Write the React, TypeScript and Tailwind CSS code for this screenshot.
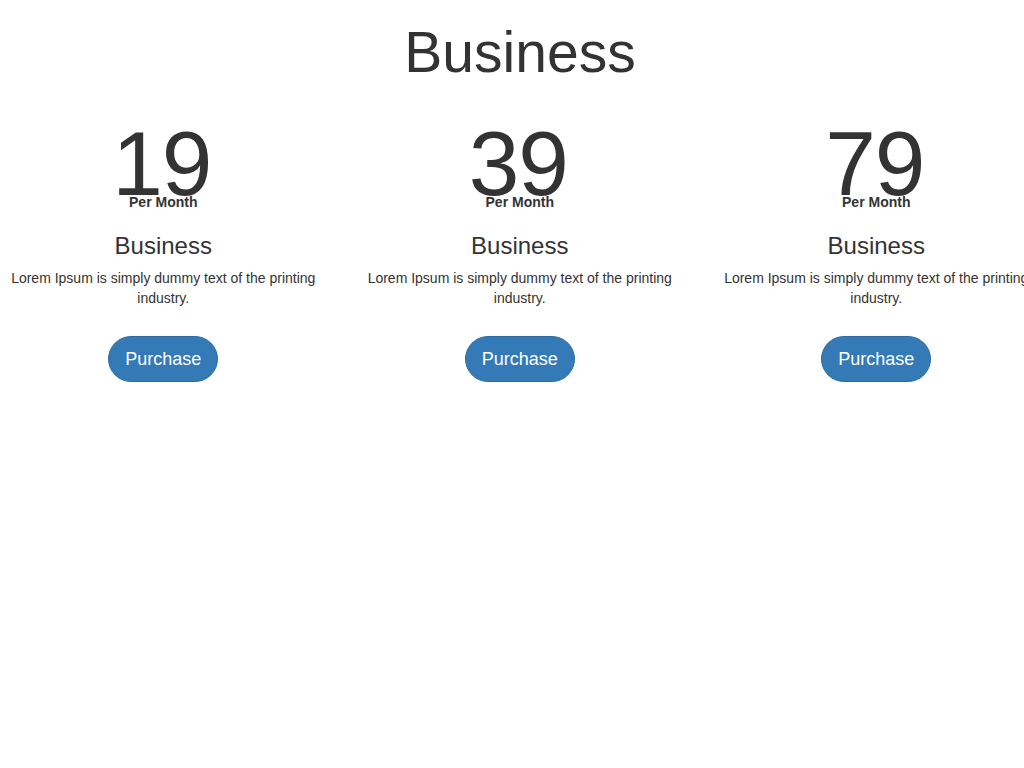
import React from "react";

interface Plan {
  price: string;
  name: string;
  description: string;
}

const plans: Plan[] = [
  { price: "19", name: "Business", description: "Lorem Ipsum is simply dummy text of the printing industry." },
  { price: "39", name: "Business", description: "Lorem Ipsum is simply dummy text of the printing industry." },
  { price: "79", name: "Business", description: "Lorem Ipsum is simply dummy text of the printing industry." },
];

const PlanCard: React.FC<{ plan: Plan }> = ({ plan }) => {
  return (
    <div className="w-[356.5px] shrink-0 px-[15px] flex flex-col items-center text-center">
      <div className="text-[91px] leading-[72px] tracking-[-1px] -ml-[3px]">{plan.price}</div>
      <div className="text-[14px] leading-[14px] font-bold -mt-[5px]">Per Month</div>
      <h3 className="text-[24px] leading-[1.1] font-medium mt-[24px]">{plan.name}</h3>
      <p className="text-[14px] leading-[20px] mt-[9px]">{plan.description}</p>
      <button className="mt-[28px] bg-[#337ab7] border border-[#2e6da4] text-white text-[18px] leading-[24px] px-[16px] py-[10px] rounded-full">
        Purchase
      </button>
    </div>
  );
};

export default function App() {
  return (
    <div className="w-full h-[768px] overflow-hidden bg-white text-[#333] font-['Liberation_Sans',Arial,sans-serif]">
      <div className="-ml-[15px] w-[1070px]">
        <h1 className="text-[57px] leading-[1.1] font-medium mt-[21px] text-center">Business</h1>
        <div className="flex mt-[44px]">
          {plans.map((plan) => (
            <PlanCard key={plan.price} plan={plan} />
          ))}
        </div>
      </div>
    </div>
  );
}
